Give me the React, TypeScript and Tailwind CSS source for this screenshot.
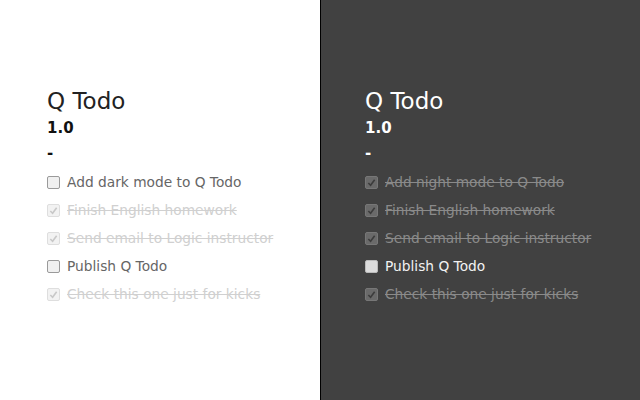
import React from "react";

type Item = { text: string; done: boolean };

const leftItems: Item[] = [
  { text: "Add dark mode to Q Todo", done: false },
  { text: "Finish English homework", done: true },
  { text: "Send email to Logic instructor", done: true },
  { text: "Publish Q Todo", done: false },
  { text: "Check this one just for kicks", done: true },
];

const rightItems: Item[] = [
  { text: "Add night mode to Q Todo", done: true },
  { text: "Finish English homework", done: true },
  { text: "Send email to Logic instructor", done: true },
  { text: "Publish Q Todo", done: false },
  { text: "Check this one just for kicks", done: true },
];

function Check({ dark, done }: { dark: boolean; done: boolean }) {
  const box = dark
    ? done
      ? "bg-[#6a6a6a] border-[#777]"
      : "bg-[#dcdcdc] border-[#bbb]"
    : done
    ? "bg-[#f2f2f2] border-[#dedede]"
    : "bg-[#f0f0f0] border-[#9a9a9a]";
  const mark = dark ? "#3c3c3c" : "#c8c8c8";
  return (
    <span className={`w-[13px] h-[13px] rounded-[2px] border flex items-center justify-center shrink-0 ${box}`}>
      {done && (
        <svg width="9" height="9" viewBox="0 0 10 10">
          <path d="M1.5 5.5 L4 8 L8.5 2" fill="none" stroke={mark} strokeWidth="1.8" />
        </svg>
      )}
    </span>
  );
}

function Panel({ dark, items }: { dark: boolean; items: Item[] }) {
  return (
    <div
      className={`w-[320px] shrink-0 h-full pt-[86px] overflow-hidden ${dark ? "bg-[#414141] border-l border-black pl-[44px]" : "bg-white pl-[47px]"}`}
    >
      <div className={`text-[23px] leading-[30px] ${dark ? "text-white" : "text-[#222]"}`}>Q Todo</div>
      <div className={`text-[15px] leading-[22px] font-bold mt-[1px] ${dark ? "text-white" : "text-[#111]"}`}>1.0</div>
      <div className={`text-[15px] leading-[22px] font-bold mt-[3px] ${dark ? "text-white" : "text-[#111]"}`}>-</div>
      <div className="mt-[4px] flex flex-col">
        {items.map((it, i) => (
          <div key={i} className="h-[28px] flex items-center gap-[7px]">
            <Check dark={dark} done={it.done} />
            <span
              className={`text-[13.75px] whitespace-nowrap ${
                it.done
                  ? dark
                    ? "text-[#8a8a8a] line-through"
                    : "text-[#d0d0d0] line-through"
                  : dark
                  ? "text-[#f2f2f2]"
                  : "text-[#666]"
              }`}
            >
              {it.text}
            </span>
          </div>
        ))}
      </div>
    </div>
  );
}

export default function App() {
  return (
    <div className="w-[640px] h-[400px] flex" style={{ fontFamily: '"DejaVu Sans", sans-serif' }}>
      <Panel dark={false} items={leftItems} />
      <Panel dark={true} items={rightItems} />
    </div>
  );
}
